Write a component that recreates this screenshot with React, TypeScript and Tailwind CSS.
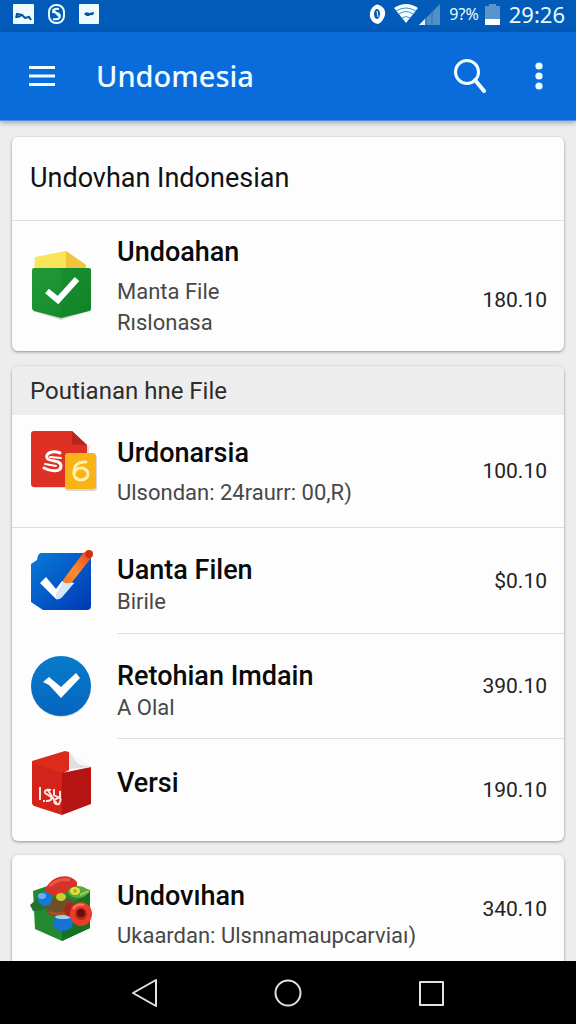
import type { ReactNode } from "react";

function GreenBox() {
  return (
    <svg viewBox="0 0 66 72" className="h-[72px] w-[66px]" aria-hidden="true">
      <defs>
        <linearGradient id="gb" x1="0" x2="1" y2="1">
          <stop offset="0" stopColor="#239a38" />
          <stop offset="1" stopColor="#12862a" />
        </linearGradient>
      </defs>
      <path d="M3 61 31 70 60 61 58 56H4z" fill="#000" opacity=".16" />
      <path d="M5 7 36 1 55 14 56 24H4z" fill="#fbe35a" />
      <path d="M36 1 56 15V24H36z" fill="#f0c43c" />
      <path d="M4 18H59Q61 18 61 20V59Q61 61 59 61L31 68 4 61Q2 60 2 58V20Q2 18 4 18Z" fill="url(#gb)" />
      <path d="M31 18H59Q61 18 61 20V59Q61 61 59 61L31 68Z" fill="#087a20" opacity=".25" />
      <path d="m17 41 11 9 19-21" fill="none" stroke="#fff" strokeWidth="6" />
    </svg>
  );
}

function RedDocument() {
  return (
    <svg viewBox="0 0 68 64" className="h-[64px] w-[68px]" aria-hidden="true">
      <path d="M3 4H42L59 18V59H4z" fill="#000" opacity=".12" />
      <path d="M4 2H42L57 16V55Q57 58 54 58H4Q1 58 1 55V5Q1 2 4 2Z" fill="#df3025" />
      <path d="M42 2V13Q42 16 45 16H57Z" fill="#b5271f" />
      <g fill="none" stroke="#fff" strokeLinecap="round">
        <path d="M30 24C23 21 15 24 17 29C18 33 31 30 31 37C31 43 21 43 14 39" strokeWidth="3" />
        <path d="M20 28 31 29M15 35 26 37" strokeWidth="2" />
      </g>
      <rect x="35" y="26" width="32" height="36" rx="3" fill="#000" opacity=".15" />
      <rect x="35" y="24" width="31" height="36" rx="3" fill="#fab317" />
      <path d="M56 33Q44 32 44 44" fill="none" stroke="#fff0b0" strokeWidth="3" strokeLinecap="round" />
      <ellipse cx="51" cy="45" rx="7" ry="6" fill="none" stroke="#fff0b0" strokeWidth="3" />
    </svg>
  );
}

function PencilCheck() {
  return (
    <svg viewBox="0 0 66 64" className="h-[64px] w-[66px]" aria-hidden="true">
      <defs>
        <linearGradient id="pc" x1="0" x2="1" y2="1">
          <stop offset="0" stopColor="#087bd8" />
          <stop offset="1" stopColor="#0138b4" />
        </linearGradient>
        <linearGradient id="pn" x1="1" x2="0" y2="1">
          <stop offset="0" stopColor="#e5471e" />
          <stop offset=".6" stopColor="#fb8c32" />
          <stop offset="1" stopColor="#f57725" />
        </linearGradient>
      </defs>
      <path d="M11 4H57Q61 4 61 8V57Q61 61 57 61H13L1 53V15L7 11Q8 4 11 4Z" fill="url(#pc)" />
      <path d="M16 28 10 34 26 50Q29 51 32 48L44 34 32 32 26 40Z" fill="#fff" />
      <path d="M26 45 34 32 44 34 32 48Q29 51 26 50Z" fill="#d5e6f7" />
      <path d="M54 3 61 9 43 32Q39 36 33 33V31Z" fill="url(#pn)" />
      <circle cx="59" cy="5" r="4" fill="#d62d16" />
    </svg>
  );
}

function CircleCheck() {
  return (
    <svg viewBox="0 0 66 64" className="h-[64px] w-[66px]" aria-hidden="true">
      <defs>
        <linearGradient id="cc" x1="0" x2="0" y2="1">
          <stop offset="0" stopColor="#087cc9" />
          <stop offset="1" stopColor="#0565c0" />
        </linearGradient>
      </defs>
      <circle cx="31" cy="33" r="30" fill="#000" opacity=".15" />
      <circle cx="31" cy="32" r="30" fill="url(#cc)" />
      <path d="m13 28 6-5 12 10 15-14 4 5-19 20-12-13z" fill="#fff" />
    </svg>
  );
}

function RedCube() {
  return (
    <svg viewBox="0 0 66 68" className="h-[68px] w-[66px]" aria-hidden="true">
      <path d="M2 11 35 1 39 2V20L32 24 2 16Z" fill="#dc2a1d" />
      <path d="M2 13 32 23V65L4 56Q2 55 2 53Z" fill="#d4231a" />
      <path d="M32 23 61 17V54L32 65Z" fill="#b61413" />
      <path d="M39 2 61 17 39 19Z" fill="#dfe0e1" />
      <path d="M39 2 61 17 48 14Z" fill="#f8f8f8" />
      <g fill="none" stroke="#ffe5e1" strokeWidth="2">
        <path d="M10 37V50M13 51H15M21 40Q14 39 15 43L21 47Q23 51 16 51M17 39 27 54M24 39V45L31 49M30 41V47L24 50Q24 55 29 54L31 49" />
      </g>
    </svg>
  );
}

function ToyBox() {
  return (
    <svg viewBox="0 0 66 68" className="h-[68px] w-[66px]" aria-hidden="true">
      <path d="m3 16 29-10 28 9v38L32 66 5 54z" fill="#23882f" />
      <path d="m32 34 28-16v35L32 66z" fill="#147222" />
      <path d="m0 30 7-6 14 6-9 5-9 1z" fill="#256f32" />
      <path d="M15 30q10-13 28-5l4 10q-14 12-29 4z" fill="#715029" />
      <path d="M19 37q10 5 21-1" fill="none" stroke="#b24c25" strokeWidth="3" />
      <path d="M14 18C19 0 39-3 47 7V15Q36 16 28 21L14 18Z" fill="#d83328" />
      <path d="M20 11Q28 3 40 5" fill="none" stroke="#ef5545" strokeWidth="3" />
      <ellipse cx="15" cy="24" rx="7" ry="7" fill="#1779d6" />
      <ellipse cx="12" cy="21" rx="4" ry="3" fill="#65b3f5" />
      <ellipse cx="31" cy="22" rx="5" ry="4" fill="#c2d12c" />
      <ellipse cx="48" cy="17" rx="10" ry="6" fill="#60a83a" />
      <ellipse cx="45" cy="16" rx="5" ry="4" fill="#e5e23d" />
      <circle cx="45" cy="16" r="2" fill="#a9b22b" />
      <path d="m50 20 9-4" stroke="#93ce60" strokeWidth="2" />
      <ellipse cx="33" cy="48" rx="10" ry="8" fill="#1473d3" />
      <ellipse cx="33" cy="42" rx="8" ry="2" fill="#9cd2ef" />
      <circle cx="41" cy="35" r="7" fill="#a72720" />
      <ellipse cx="51" cy="39" rx="11" ry="12" fill="#e73e2a" />
      <circle cx="51" cy="39" r="6" fill="#bf2019" />
      <circle cx="51" cy="38" r="4" fill="#66100d" />
      <path d="M43 34q4-6 11-4" fill="none" stroke="#fb7860" strokeWidth="2" />
    </svg>
  );
}

type RowProps = {
  icon: ReactNode;
  title: string;
  lines?: string[];
  price: string;
  className: string;
  iconClass?: string;
  textClass: string;
  priceClass?: string;
};

function Row({ icon, title, lines = [], price, className, iconClass = "", textClass, priceClass = "" }: RowProps) {
  return (
    <li className={`flex items-center pr-[17px] pl-[18px] ${className}`}>
      <div className={`w-[87px] shrink-0 ${iconClass}`}>{icon}</div>
      <div className={`flex min-w-0 flex-1 flex-col self-start ${textClass}`}>
        <h3 className="text-[27px] leading-8 font-medium text-[#0a0a0a]">{title}</h3>
        {lines.length > 0 && (
          <div className="text-[22px] leading-[31px] whitespace-nowrap text-[#484848]">
            {lines.map((line) => (
              <p key={line}>{line}</p>
            ))}
          </div>
        )}
      </div>
      <span className={`text-[21px] leading-8 text-[#222] ${priceClass}`}>{price}</span>
    </li>
  );
}

function InsetDivider() {
  return <li role="separator" className="ml-[105px] h-px bg-[#dedede]" />;
}

function StatusBar() {
  return (
    <div className="flex h-8 shrink-0 items-center justify-between bg-[#025bb8] pr-[11px] pl-[13px] text-[#e8fbff]">
      <div className="flex items-center gap-[14px] pb-1">
        <svg viewBox="0 0 21 20" className="h-5 w-[21px]" aria-hidden="true">
          <rect width="21" height="20" rx="1" fill="#effcff" />
          <path d="M3 14 4 10 9 11 12 14 16 13 18 16M8 12 4 13" fill="none" stroke="#07539c" strokeWidth="2" />
        </svg>
        <svg viewBox="0 0 17 20" className="h-5 w-[17px]" aria-hidden="true">
          <rect x="1" y="1" width="15" height="18" rx="7" fill="none" stroke="#e8fbff" strokeWidth="2" />
          <path d="M5 5q3 5 7 8M11 5q-6-1-6 3 7 1 7 4 0 4-7 3" fill="none" stroke="#e8fbff" strokeWidth="2" />
        </svg>
        <svg viewBox="0 0 20 20" className="h-5 w-5" aria-hidden="true">
          <rect width="20" height="20" rx="1" fill="#effcff" />
          <path d="M5 10q2-3 5-1l5-1q0 4-4 3-2 3-6-1z" fill="#07539c" />
        </svg>
      </div>
      <div className="flex items-center pb-1 font-['Noto_Sans',sans-serif]">
        <svg viewBox="0 0 17 20" className="mr-2 h-5 w-[17px]" aria-hidden="true">
          <path d="M5 2Q8-1 12 2q5 3 4 9-2 7-7 9-6-1-8-7Q0 6 5 2Z" fill="#fff" />
          <ellipse cx="8" cy="10" rx="3" ry="5" fill="#075bad" />
          <path d="m8 7 1 6" stroke="#fff" />
        </svg>
        <svg viewBox="0 0 24 20" className="h-5 w-6" aria-hidden="true">
          <path d="M0 4Q12-4 24 4L12 19Z" fill="#f2fdff" />
          <path d="M2 7q10-6 20 0M5 10q7-5 14 0M8 14q4-3 8 0" fill="none" stroke="#4c91cf" />
        </svg>
        <svg viewBox="0 0 22 21" className="mr-[9px] h-[21px] w-[22px]" aria-hidden="true">
          <path d="M1 21 22 0v21z" fill="#528fc8" />
          <path d="m1 21 6-6v6z" fill="#e8fbff" />
          <path d="M8 13v8M14 7v14" stroke="#2570b9" />
        </svg>
        <span className="mr-[6px] text-base leading-5">9?%</span>
        <svg viewBox="0 0 15 21" className="mr-[9px] h-[21px] w-[15px]" aria-hidden="true">
          <path d="M4 0h7v2h4v13H0V2h4z" fill="#5995cc" />
          <path d="M0 15h15v6H0z" fill="#fff" />
        </svg>
        <time className="text-[22px] leading-6">29:26</time>
      </div>
    </div>
  );
}

export default function App() {
  return (
    <div className="flex h-screen flex-col overflow-hidden bg-[#ededee] font-['Roboto',sans-serif]">
      <StatusBar />
      <header className="z-10 flex h-[89px] shrink-0 items-center border-b border-[#4b91df] bg-[#096cda] px-[29px] text-[#effdff] shadow-[0_2px_5px_rgba(0,0,0,0.3)]">
        <button type="button" aria-label="Menu" className="mr-[41px]">
          <svg viewBox="0 0 26 22" className="h-[22px] w-[26px]" aria-hidden="true">
            <path d="M0 2.5h26M0 11h26M0 19.5h26" stroke="currentColor" strokeWidth="3" />
          </svg>
        </button>
        <h1 className="flex-1 font-['Noto_Sans',sans-serif] text-[29px] leading-10 font-medium">Undomesia</h1>
        <button type="button" aria-label="Search" className="mr-12">
          <svg viewBox="0 0 34 34" className="h-[34px] w-[34px]" fill="none" stroke="currentColor" strokeWidth="3" aria-hidden="true">
            <circle cx="14" cy="13" r="11.5" />
            <path d="m22 21 9 11" strokeWidth="4" strokeLinecap="round" />
          </svg>
        </button>
        <button type="button" aria-label="More options" className="pr-1">
          <svg viewBox="0 0 8 28" className="h-7 w-2" fill="currentColor" aria-hidden="true">
            <circle cx="4" cy="4" r="3.6" />
            <circle cx="4" cy="14" r="3.6" />
            <circle cx="4" cy="24" r="3.6" />
          </svg>
        </button>
      </header>

      <main className="min-h-0 flex-1 overflow-hidden px-3 pt-4">
        <section className="rounded-md bg-[#fdfdfd] shadow-[0_1px_3px_rgba(0,0,0,0.4)]">
          <h2 className="flex h-[84px] items-center border-b border-[#e0e0e0] px-[18px] pb-0.5 text-[27px] leading-8 text-[#111]">
            Undovhan Indonesian
          </h2>
          <ul>
            <Row
              icon={<GreenBox />}
              title="Undoahan"
              lines={["Manta File", "Rıslonasa"]}
              price="180.10"
              className="h-[130px]"
              textClass="gap-2 pt-[15px]"
              priceClass="mt-7"
            />
          </ul>
        </section>

        <section className="mt-[15px] rounded-md bg-[#fdfdfd] shadow-[0_1px_3px_rgba(0,0,0,0.4)]">
          <h2 className="flex h-[49px] items-center rounded-t-md bg-[#ededed] px-[18px] text-2xl leading-8 text-[#2c2c2c]">
            Poutianan hne File
          </h2>
          <ul>
            <Row
              icon={<RedDocument />}
              title="Urdonarsia"
              lines={["Ulsondan: 24raurr: 00,R)"]}
              price="100.10"
              className="h-28"
              iconClass="-mt-5"
              textClass="gap-2 pt-[22px]"
            />
            <li role="separator" className="h-px bg-[#dedede]" />
            <Row
              icon={<PencilCheck />}
              title="Uanta Filen"
              lines={["Birile"]}
              price="$0.10"
              className="h-[105px]"
              textClass="pt-[26px]"
            />
            <InsetDivider />
            <Row
              icon={<CircleCheck />}
              title="Retohian Imdain"
              lines={["A Olal"]}
              price="390.10"
              className="h-[104px]"
              textClass="pt-[26px]"
            />
            <InsetDivider />
            <Row
              icon={<RedCube />}
              title="Versi"
              price="190.10"
              className="h-[102px]"
              iconClass="-mt-3"
              textClass="pt-7"
            />
          </ul>
        </section>

        <section className="mt-[14px] rounded-t-md bg-[#fdfdfd] shadow-[0_1px_3px_rgba(0,0,0,0.4)]">
          <ul>
            <Row
              icon={<ToyBox />}
              title="Undovıhan"
              lines={["Ukaardan: Ulsnnamaupcarviaı)"]}
              price="340.10"
              className="h-[108px]"
              textClass="gap-2 pt-[25px]"
            />
          </ul>
        </section>
      </main>

      <nav className="z-10 flex h-[63px] shrink-0 items-center justify-center gap-[116px] bg-black text-[#e2e2e2]">
        <button type="button" aria-label="Back">
          <svg viewBox="0 0 28 28" className="h-7 w-7" fill="none" stroke="currentColor" strokeWidth="2" strokeLinejoin="round" aria-hidden="true">
            <path d="M26 1v26L3 14z" />
          </svg>
        </button>
        <button type="button" aria-label="Home">
          <svg viewBox="0 0 28 28" className="h-7 w-7" fill="none" stroke="currentColor" strokeWidth="2" aria-hidden="true">
            <circle cx="14" cy="14" r="12.5" />
          </svg>
        </button>
        <button type="button" aria-label="Recent apps">
          <svg viewBox="0 0 28 28" className="h-7 w-7" fill="none" stroke="currentColor" strokeWidth="2" strokeLinejoin="round" aria-hidden="true">
            <rect x="2" y="3" width="23" height="23" />
          </svg>
        </button>
      </nav>
    </div>
  );
}
